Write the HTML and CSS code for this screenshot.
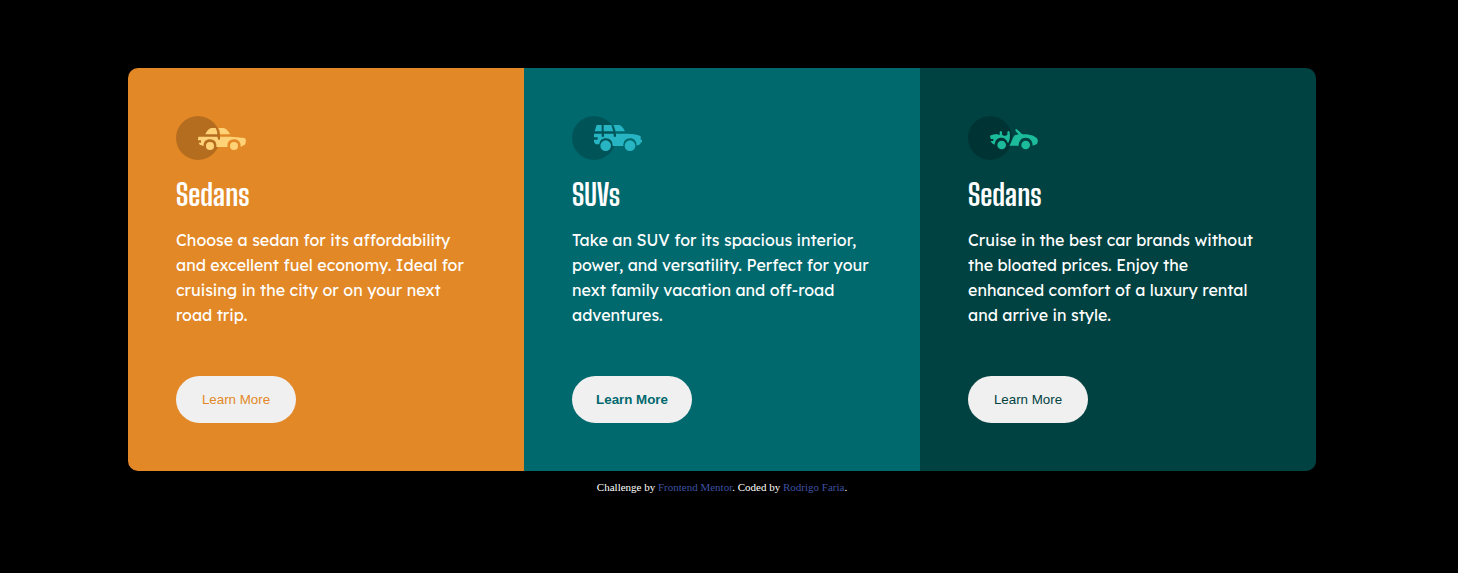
FILE: index.html
```html
<!DOCTYPE html>
<html lang="en">
<head>
<meta charset="utf-8">
<meta name="viewport" content="width=device-width, initial-scale=1">
<title>Car rental cards</title>
<link rel="stylesheet" href="styles.css">
</head>
<body>
<main class="cards">
  <section class="card card-sedan">
    <svg class="icon" viewBox="18 18 210 132" aria-hidden="true">
      <circle class="disc" cx="84" cy="84" r="66"/>
      <path d="M106 73C110 63 116 56 124 54H137C140 60 142 66 142 73Z"/>
      <path d="M145 54H160C170 56 175 64 181 73H150C150 65 149 60 145 54Z"/>
      <path d="M86 80H142L145 89H150V80H184C200 82 218 82 225 85L228 91L226 103L212 111C213 96 204 88 192 88C179 88 170 97 173 111H139C141 97 133 88 120 88C108 88 100 95 101 108L89 104L86 98H93V91H84V84Z"/>
      <circle cx="120" cy="108" r="12"/><circle cx="192" cy="108" r="12"/>
    </svg>
    <h2 class="title">Sedans</h2>
    <p class="text">Choose a sedan for its affordability and excellent fuel economy. Ideal for cruising in the city or on your next road trip.</p>
    <button class="button" type="button">Learn More</button>
  </section>
  <section class="card card-suv">
    <svg class="icon" viewBox="18 18 210 132" aria-hidden="true">
      <circle class="disc" cx="84" cy="84" r="66"/>
      <path d="M92 45H107V64H86ZM113 45H136L142 64H113ZM143 45H160C168 48 173 55 177 64H149Z"/>
      <path d="M86 71H107V80H114V71H143V80H150V71H186C201 72 218 74 224 79V89H228V97H225L222 103L212 107C212 93 204 85 192 85C179 85 172 94 172 108H140C140 94 133 85 119 85C108 85 101 92 100 103H89L84 96V89H95V82H84V73Z"/>
      <circle cx="119" cy="107" r="16"/><circle cx="192" cy="107" r="16"/>
    </svg>
    <h2 class="title">SUVs</h2>
    <p class="text">Take an SUV for its spacious interior, power, and versatility. Perfect for your next family vacation and off-road adventures.</p>
    <button class="button" type="button">Learn More</button>
  </section>
  <section class="card card-luxury">
    <svg class="icon" viewBox="18 18 210 132" aria-hidden="true">
      <circle class="disc" cx="84" cy="84" r="66"/>
      <path d="M84 77C92 74 98 73 103 72L113 75V66Q116 60 120 66V74L127 78L136 75V66Q140 60 143 67C145 80 144 92 138 100C134 89 128 83 118 83C107 83 99 90 98 104L90 100L86 93H94V87H86Z"/>
      <path d="M160 59Q163 55 167 60L181 73C201 72 218 77 225 85L228 92L225 102L212 107C212 92 204 83 191 83C178 83 170 93 170 107H142C149 97 151 83 158 76L170 73L161 64Z"/>
      <circle cx="119" cy="105" r="13"/><circle cx="191" cy="105" r="13"/>
    </svg>
    <h2 class="title">Sedans</h2>
    <p class="text">Cruise in the best car brands without the bloated prices. Enjoy the enhanced comfort of a luxury rental and arrive in style.</p>
    <button class="button" type="button">Learn More</button>
  </section>
</main>
<footer class="attribution">
  Challenge by <a href="#mentor">Frontend Mentor</a>. Coded by <a href="#author">Rodrigo Faria</a>.
</footer>
</body>
</html>
```
FILE: styles.css
```css
* { box-sizing: border-box; }
body {
  margin: 0;
  padding: 68px 142px 0 128px;
  background: #000;
  color: #fff;
  font-family: "Liberation Serif", serif;
}
.cards {
  display: grid;
  grid-template-columns: repeat(3, 1fr);
  border-radius: 10px;
  overflow: hidden;
}
.card {
  display: flex;
  flex-direction: column;
  align-items: flex-start;
  padding: 48px;
}
.card-sedan { background: #e28826; --accent: #e28826; --art: #ffd278; }
.card-suv { background: #00696e; --accent: #00696e; --art: #28b5c3; }
.card-luxury { background: #004241; --accent: #004241; --art: #1cbb9b; }
.icon { width: 70px; height: 44px; fill: var(--art); }
.disc { fill: #000; fill-opacity: .2; }
.title {
  margin: 16px 0;
  font: 700 30px/36px "Big Shoulders Display", "Liberation Sans Narrow", "Roboto Condensed", "Liberation Sans", sans-serif;
}
.text {
  margin: 0 0 48px;
  font: 400 16px/25px "Lexend Deca", Inter, sans-serif;
}
.button {
  width: 120px;
  height: 47px;
  margin-top: auto;
  padding: 0;
  border: 0;
  border-radius: 24px;
  background: #f0f0f0;
  color: var(--accent);
  font-family: "Liberation Sans", Arial, sans-serif;
  cursor: pointer;
}
.card-suv .button { font-weight: 700; }
.attribution {
  padding-top: 10px;
  font-size: 11px;
  line-height: 13px;
  text-align: center;
}
.attribution a { color: #3e52a3; text-decoration: none; }
```
